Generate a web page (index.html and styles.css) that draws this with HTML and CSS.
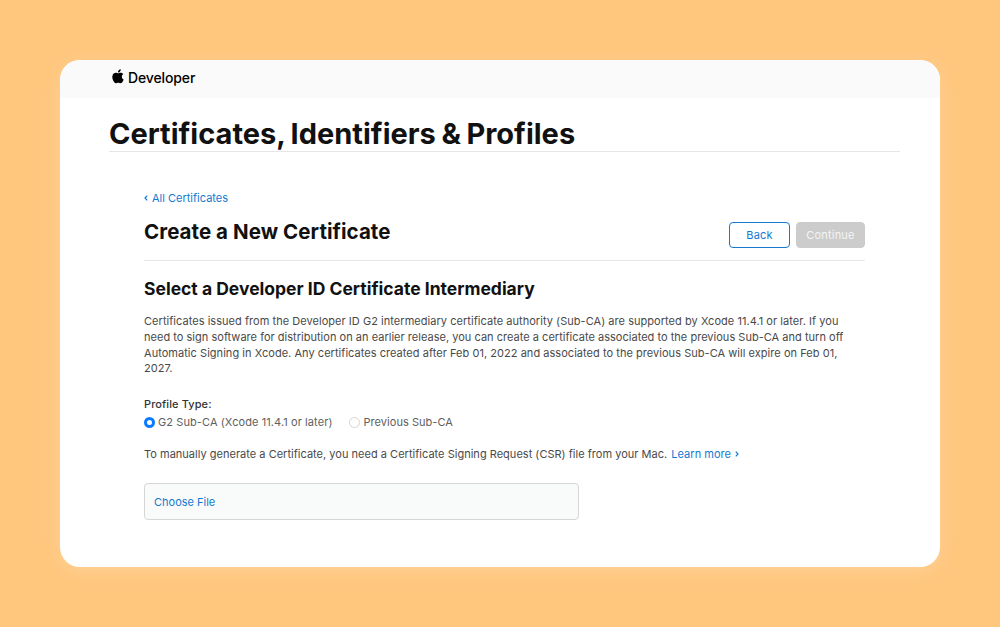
FILE: index.html
```html
<!DOCTYPE html>
<html lang="en">
<head>
<meta charset="utf-8">
<title>Certificates, Identifiers &amp; Profiles</title>
<link rel="stylesheet" href="styles.css">
</head>
<body>
<div class="window">
  <header class="topbar">
    <svg class="logo" viewBox="0 0 24 24" aria-hidden="true"><path d="M12.152 6.896c-.948 0-2.415-1.078-3.96-1.04-2.04.027-3.91 1.183-4.961 3.014-2.117 3.675-.546 9.103 1.519 12.09 1.013 1.454 2.208 3.09 3.792 3.039 1.52-.065 2.09-.987 3.935-.987 1.831 0 2.35.987 3.96.948 1.637-.026 2.676-1.48 3.676-2.948 1.156-1.688 1.636-3.325 1.662-3.415-.039-.013-3.182-1.221-3.22-4.857-.026-3.04 2.48-4.494 2.597-4.559-1.429-2.09-3.623-2.324-4.39-2.376-2-.156-3.675 1.09-4.61 1.09zM15.53 3.83c.843-1.012 1.4-2.427 1.245-3.83-1.207.052-2.662.805-3.532 1.818-.78.896-1.454 2.338-1.273 3.714 1.338.104 2.715-.688 3.559-1.701"/></svg>
    <span class="brand">Developer</span>
  </header>
  <main class="page">
    <h1 class="title">Certificates, Identifiers &amp; Profiles</h1>
    <section class="content">
      <a class="link back-link"><svg class="chevron" viewBox="0 0 4 6"><path d="M3.2.6 1 3l2.2 2.4"/></svg><span>All Certificates</span></a>
      <div class="heading-row">
        <h2 class="heading">Create a New Certificate</h2>
        <div class="actions">
          <button class="button button-outline">Back</button>
          <button class="button button-disabled">Continue</button>
        </div>
      </div>
      <h3 class="subheading">Select a Developer ID Certificate Intermediary</h3>
      <p class="text"><span class="loose">Certificates issued from the Developer ID G2 intermediary certificate authority (Sub-CA) are supported by Xcode 11.4.1 or later. If you</span><br>need to sign software for distribution on an earlier release, you can create a certificate associated to the previous Sub-CA and turn off<br><span class="loose">Automatic Signing in Xcode. Any certificates created after Feb 01, 2022 and associated to the previous Sub-CA will expire on Feb 01,</span><br>2027.</p>
      <div class="label">Profile Type:</div>
      <div class="options">
        <label class="option option-first"><i class="radio radio-on"></i><span>G2 Sub-CA (Xcode 11.4.1 or later)</span></label>
        <label class="option option-second"><i class="radio"></i><span>Previous Sub-CA</span></label>
      </div>
      <p class="csr">To manually generate a Certificate, you need a Certificate Signing Request (CSR) file from your Mac. <a class="link more"><span>Learn more</span><svg class="chevron" viewBox="0 0 4 6"><path d="M.8.6 3 3 .8 5.4"/></svg></a></p>
      <div class="file">Choose File</div>
    </section>
  </main>
</div>
</body>
</html>
```

FILE: styles.css
```css
* { box-sizing: border-box; }

body {
  margin: 0;
  height: 627px;
  padding: 60px;
  background: #ffc67d;
  font-family: Inter, "Liberation Sans", sans-serif;
  font-size: 11px;
  color: #494949;
}

h1, h2, h3, p { margin: 0; }

.window {
  height: 507px;
  border-radius: 20px;
  background: #fff;
  overflow: hidden;
  box-shadow: 0 4px 20px rgba(255, 255, 255, 0.2);
}

.topbar {
  display: flex;
  height: 38px;
  padding: 9px 0 0 51px;
  background: #fafafa;
  color: #000;
}

.logo { width: 14px; height: 14.5px; }

.brand {
  margin-left: 3px;
  font-size: 14px;
  font-weight: 500;
  line-height: 18px;
  letter-spacing: -0.12px;
}

.page { padding: 18px 40px 0 49px; }

.title {
  height: 36px;
  border-bottom: 1px solid #e6e6e6;
  color: #111;
  font-size: 29px;
  font-weight: 700;
  line-height: 36px;
  letter-spacing: 0;
  word-spacing: -1.3px;
}

.content { padding: 38px 35px 0; }

.link { display: inline-flex; align-items: center; color: #1479cf; }

.back-link { display: flex; height: 16px; gap: 4px; }

.chevron {
  width: 4px;
  height: 6px;
  fill: none;
  stroke: currentColor;
  stroke-width: 1.2;
}

.heading-row {
  display: flex;
  justify-content: space-between;
  height: 55px;
  border-bottom: 1px solid #e6e6e6;
}

.heading {
  padding-top: 12px;
  color: #111;
  font-size: 20.5px;
  font-weight: 650;
  line-height: 27px;
  letter-spacing: 0.06px;
}

.actions { display: flex; gap: 6px; padding-top: 16px; }

.button {
  height: 26px;
  padding: 0;
  border: 1px solid #ccc;
  border-radius: 4px;
  font: inherit;
}

.button-outline { width: 61px; background: #fff; border-color: #1479cf; color: #1479cf; letter-spacing: 0.15px; }
.button-disabled { width: 69px; background: #ccc; color: #f4f4f4; letter-spacing: 0.2px; }

.subheading {
  margin-top: 15px;
  color: #111;
  font-size: 17.5px;
  font-weight: 650;
  line-height: 25px;
}

.text {
  margin-top: 13px;
  line-height: 15.75px;
  letter-spacing: 0.022px;
  white-space: nowrap;
}

.loose { letter-spacing: 0.04px; }

.label {
  margin-top: 19px;
  font-weight: 550;
  line-height: 16px;
  letter-spacing: 0.1px;
  color: #333;
}

.options { display: flex; gap: 16px; margin-top: 2px; }

.option {
  display: flex;
  align-items: center;
  gap: 3px;
  line-height: 16px;
  letter-spacing: 0.04px;
  color: #606060;
}

.option-first { letter-spacing: 0.09px; }
.option-second { gap: 4px; }

.radio {
  width: 11px;
  height: 11px;
  border: 1px solid #d5d5d5;
  border-radius: 50%;
  background: #fff;
}

.radio-on { border: 3.5px solid #0a7aff; }

.csr { margin-top: 16px; line-height: 16px; letter-spacing: 0.017px; white-space: nowrap; }

.more { gap: 4px; margin-left: 1px; }

.file {
  width: 435px;
  height: 37px;
  margin-top: 21px;
  padding: 0 9px;
  border: 1px solid #d6d6d6;
  border-radius: 4px;
  background: #f9fbfa;
  color: #1479cf;
  line-height: 36px;
}
```
